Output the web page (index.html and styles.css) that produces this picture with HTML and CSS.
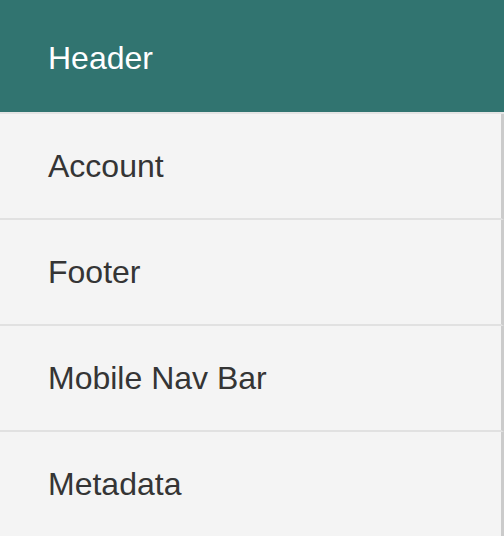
FILE: index.html
```html
<!DOCTYPE html>
<html>
<head>
<meta charset="utf-8">
<link rel="stylesheet" href="styles.css">
</head>
<body>
<nav class="menu">
  <div class="item active">Header</div>
  <div class="item">Account</div>
  <div class="item">Footer</div>
  <div class="item">Mobile Nav Bar</div>
  <div class="item">Metadata</div>
</nav>
</body>
</html>
```
FILE: styles.css
```css
html, body {
  margin: 0;
  padding: 0;
  background: #f4f4f4;
}
body {
  font-family: "Liberation Sans", Arial, sans-serif;
  width: 504px;
  height: 536px;
  overflow: hidden;
}
.menu {
  display: flex;
  flex-direction: column;
}
.item {
  height: 104px;
  display: flex;
  align-items: center;
  padding-left: 48px;
  font-size: 32px;
  color: #353535;
  background: #f4f4f4;
  border-bottom: 2px solid #e1e1e1;
  border-right: 3px solid #cbcbcb;
  box-sizing: content-box;
}
.item.active {
  height: 108px;
  padding-top: 4px;
  background: #317470;
  color: #ffffff;
  border-right: none;
  border-bottom: 2px solid #e4e4e4;
}
```
